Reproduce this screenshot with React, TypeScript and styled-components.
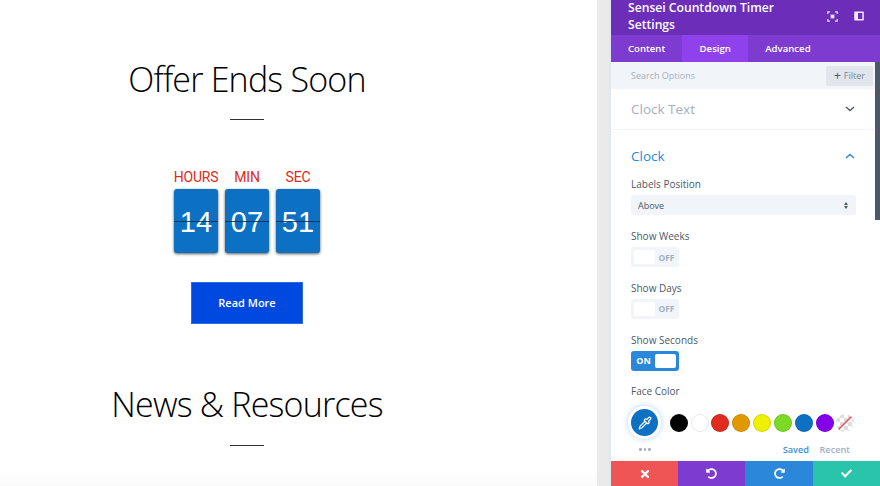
import React from "react";
import styled, { createGlobalStyle } from "styled-components";
import { FaTimes, FaUndoAlt, FaRedoAlt, FaCheck } from "react-icons/fa";
import { Pipette } from "lucide-react";

const GlobalStyle = createGlobalStyle`
  html, body {
    margin: 0;
    padding: 0;
    background: #fff;
    overflow: hidden;
  }
  * {
    box-sizing: border-box;
  }
`;

const clock = [
  { label: "HOURS", value: "14" },
  { label: "MIN", value: "07" },
  { label: "SEC", value: "51" },
];

const swatches = ["#000000", "#ffffff", "#e02b20", "#e09900", "#edf000", "#7cda24", "#0c71c3", "#8300e9"];

const Chevron = ({ up, color }: { up?: boolean; color: string }) => (
  <svg width="10" height="6" viewBox="0 0 10 6" fill="none" stroke={color} strokeWidth="1.400">
    <path d={up ? "M1 5 5 1.500 9 5" : "M1 1 5 4.500 9 1"} />
  </svg>
);

const App = () => {
  return (
    <Page>
      <GlobalStyle />
      <Canvas>
        <Heading>Offer Ends Soon</Heading>
        <Divider />
        <Timer>
          {clock.map((item) => (
            <TimerColumn key={item.label}>
              <TimerLabel>{item.label}</TimerLabel>
              <Flip>
                <FlipValue>{item.value}</FlipValue>
                <FlipLine />
              </Flip>
            </TimerColumn>
          ))}
        </Timer>
        <ReadMore>Read More</ReadMore>
        <Heading $second>News &amp; Resources</Heading>
        <Divider $second />
      </Canvas>
      <Gutter />
      <Panel>
        <PanelHeader>
          <PanelTitle>Sensei Countdown Timer Settings</PanelTitle>
          <HeaderIcons>
            <svg width="11" height="11" viewBox="0 0 11 11" fill="none" stroke="#e9dcfa" strokeWidth="1.200">
              <path d="M.8 3V.8H3M8 .8h2.200V3M10.200 8v2.200H8M3 10.200H.8V8" />
              <rect x="3.600" y="3.600" width="3.800" height="3.800" fill="#e9dcfa" stroke="none" />
            </svg>
            <svg width="10" height="10" viewBox="0 0 10 10">
              <path
                fill="#f1e8fc"
                fillRule="evenodd"
                d="M1 .5h8a.8.8 0 0 1 .8.8v7.400a.8.8 0 0 1-.8.8H1a.8.8 0 0 1-.8-.8V1.300A.8.8 0 0 1 1 .5zM4 2v6h4.300V2z"
              />
            </svg>
          </HeaderIcons>
        </PanelHeader>
        <Tabs>
          <Tab>Content</Tab>
          <Tab $active>Design</Tab>
          <Tab>Advanced</Tab>
        </Tabs>
        <PanelBody>
          <PanelContent>
            <SearchBar>
              <SearchText>Search Options</SearchText>
              <FilterButton>
                <FilterPlus>+</FilterPlus> Filter
              </FilterButton>
            </SearchBar>
            <ClosedGroup>
              <GroupTitle>Clock Text</GroupTitle>
              <Chevron color="#4c5866" />
            </ClosedGroup>
            <OpenGroup>
              <OpenHead>
                <GroupTitle $open>Clock</GroupTitle>
                <Chevron up color="#2b87da" />
              </OpenHead>
              <FieldLabel>Labels Position</FieldLabel>
              <SelectBox>
                Above
                <SelectArrows>
                  <ArrowUp />
                  <ArrowDown />
                </SelectArrows>
              </SelectBox>
              <FieldLabel>Show Weeks</FieldLabel>
              <Toggle>
                <Knob />
                <ToggleText>OFF</ToggleText>
              </Toggle>
              <FieldLabel>Show Days</FieldLabel>
              <Toggle>
                <Knob />
                <ToggleText>OFF</ToggleText>
              </Toggle>
              <FieldLabel>Show Seconds</FieldLabel>
              <Toggle $on>
                <ToggleText $on>ON</ToggleText>
                <Knob />
              </Toggle>
              <FieldLabel>Face Color</FieldLabel>
              <ColorRow>
                <Picker>
                  <Pipette size={14} color="#fff" strokeWidth={2} />
                </Picker>
                <Swatches>
                  {swatches.map((c) => (
                    <Swatch key={c} $color={c} />
                  ))}
                  <NoColor>
                    <svg width="18" height="18" viewBox="0 0 18 18">
                      <path d="M16 2 2 16" stroke="#f4525a" strokeWidth="1.600" />
                    </svg>
                  </NoColor>
                </Swatches>
              </ColorRow>
              <ColorFooter>
                <Dots>
                  <Dot />
                  <Dot />
                  <Dot />
                </Dots>
                <SavedLinks>
                  <SavedLink $active>Saved</SavedLink>
                  <SavedLink>Recent</SavedLink>
                </SavedLinks>
              </ColorFooter>
            </OpenGroup>
          </PanelContent>
          <ScrollTrack>
            <ScrollThumb />
          </ScrollTrack>
        </PanelBody>
        <ActionBar>
          <Action $color="#ef5555">
            <FaTimes size={12} />
          </Action>
          <Action $color="#7e3bd0">
            <FaUndoAlt size={11} />
          </Action>
          <Action $color="#2b87da">
            <FaRedoAlt size={11} />
          </Action>
          <Action $color="#29c4a9">
            <FaCheck size={11} />
          </Action>
        </ActionBar>
      </Panel>
    </Page>
  );
};

const Page = styled.div`
  display: flex;
  width: 880px;
  height: 486px;
  overflow: hidden;
  background: #fff;
`;

const Canvas = styled.main`
  width: 597px;
  flex-shrink: 0;
  padding: 0 103px 0 0;
  display: flex;
  flex-direction: column;
  align-items: center;
  background: linear-gradient(#fff 470px, #fafafa 486px);
`;

const Heading = styled.h1<{ $second?: boolean }>`
  margin: ${(props) => (props.$second ? "58px" : "57px")} 0 0;
  font-family: "Open Sans", sans-serif;
  font-weight: 300;
  font-size: 34px;
  letter-spacing: -0.8px;
  line-height: 44px;
  color: #000;
  white-space: nowrap;
`;

const Divider = styled.div<{ $second?: boolean }>`
  width: 34px;
  height: 1px;
  margin-top: ${(props) => (props.$second ? "19px" : "18px")};
  background: #333;
`;

const Timer = styled.div`
  display: flex;
  gap: 7px;
  margin-top: 47px;
`;

const TimerColumn = styled.div`
  width: 44px;
  display: flex;
  flex-direction: column;
  align-items: center;
`;

const TimerLabel = styled.div`
  font-family: Roboto, sans-serif;
  font-size: 14px;
  letter-spacing: -0.2px;
  line-height: 20px;
  color: #e02b20;
  white-space: nowrap;
`;

const Flip = styled.div`
  position: relative;
  width: 44px;
  height: 64px;
  margin-top: 2px;
  padding-top: 3px;
  display: flex;
  align-items: center;
  justify-content: center;
  background: #0c71c3;
  border-radius: 3px;
  box-shadow: 0 1px 3px rgba(0, 0, 0, 0.65);
`;

const FlipValue = styled.span`
  font-family: "Liberation Sans", Arial, sans-serif;
  font-size: 29px;
  color: #fff;
`;

const FlipLine = styled.div`
  position: absolute;
  left: 0;
  right: 0;
  top: 32px;
  height: 1px;
  background: rgba(10, 40, 80, 0.8);
`;

const ReadMore = styled.a`
  width: 112px;
  height: 42px;
  margin-top: 29px;
  padding-bottom: 2px;
  display: flex;
  align-items: center;
  justify-content: center;
  background: #0049e0;
  border: 1px solid #2e6be6;
  color: #fff;
  font-family: "Open Sans", sans-serif;
  font-weight: 600;
  font-size: 11px;
`;

const Gutter = styled.div`
  width: 14px;
  flex-shrink: 0;
  background: linear-gradient(90deg, #e8eaeb 0, #e8eaeb 12px, #dfe8f2 12px);
`;

const Panel = styled.aside`
  width: 269px;
  flex-shrink: 0;
  height: 486px;
  background: #fff;
  font-family: "Open Sans", sans-serif;
  display: flex;
  flex-direction: column;
`;

const PanelHeader = styled.header`
  height: 35px;
  flex-shrink: 0;
  overflow: hidden;
  background: #6c2eb9;
  display: flex;
  justify-content: space-between;
  padding: 0 16px 0 17px;
`;

const PanelTitle = styled.div`
  width: 170px;
  height: 33px;
  font-size: 12.150px;
  font-weight: 600;
  line-height: 16.500px;
  color: #fff;
`;

const HeaderIcons = styled.div`
  display: flex;
  align-items: center;
  gap: 16px;
  height: 32px;
`;

const Tabs = styled.nav`
  height: 27px;
  flex-shrink: 0;
  display: flex;
  background: #7d3bcf;
`;

const Tab = styled.div<{ $active?: boolean }>`
  width: ${(props) => (props.$active ? "66px" : "auto")};
  padding: 0 17px;
  display: flex;
  align-items: center;
  justify-content: center;
  font-size: 9.600px;
  font-weight: 600;
  color: #fff;
  background: ${(props) => (props.$active ? "#8f42ec" : "transparent")};
`;

const PanelBody = styled.div`
  flex: 1;
  min-height: 0;
  display: flex;
`;

const PanelContent = styled.div`
  width: 264px;
  flex-shrink: 0;
  display: flex;
  flex-direction: column;
`;

const SearchBar = styled.div`
  height: 27px;
  flex-shrink: 0;
  display: flex;
  align-items: center;
  justify-content: space-between;
  padding: 0 2px 0 20px;
  background: #f1f5f9;
`;

const SearchText = styled.span`
  font-size: 9px;
  color: #a3b0c2;
`;

const FilterButton = styled.div`
  width: 47px;
  height: 20px;
  border-radius: 2px;
  display: flex;
  align-items: center;
  justify-content: center;
  gap: 3px;
  font-size: 9px;
  font-weight: 500;
  color: #7b8694;
  background: #e0e6ec;
`;

const FilterPlus = styled.span`
  font-size: 12px;
  line-height: 12px;
  color: #4c5866;
`;

const ClosedGroup = styled.section`
  height: 41px;
  flex-shrink: 0;
  display: flex;
  align-items: center;
  justify-content: space-between;
  padding: 0 20px;
  border-bottom: 1px solid #f1f5f9;
`;

const GroupTitle = styled.span<{ $open?: boolean }>`
  font-size: 13.500px;
  color: ${(props) => (props.$open ? "#2b87da" : "#a3b0c2")};
`;

const OpenGroup = styled.section`
  flex: 1;
  min-height: 0;
  padding: 0 19px 0 20px;
  display: flex;
  flex-direction: column;
`;

const OpenHead = styled.div`
  height: 18px;
  margin: 17px 0 12px;
  padding-right: 1px;
  flex-shrink: 0;
  display: flex;
  align-items: center;
  justify-content: space-between;
`;

const FieldLabel = styled.label`
  font-size: 10px;
  line-height: 14px;
  color: #4c5866;
  margin-bottom: 4px;
`;

const SelectBox = styled.div`
  height: 20px;
  margin-bottom: 14px;
  padding: 0 8px 0 7px;
  flex-shrink: 0;
  display: flex;
  align-items: center;
  justify-content: space-between;
  border-radius: 3px;
  background: #f1f5f9;
  font-size: 9px;
  color: #4c5866;
`;

const SelectArrows = styled.div`
  display: flex;
  flex-direction: column;
  gap: 1px;
`;

const ArrowUp = styled.i`
  border-left: 2.500px solid transparent;
  border-right: 2.500px solid transparent;
  border-bottom: 3px solid #4c5866;
`;

const ArrowDown = styled.i`
  border-left: 2.500px solid transparent;
  border-right: 2.500px solid transparent;
  border-top: 3px solid #4c5866;
`;

const Toggle = styled.div<{ $on?: boolean }>`
  width: 48px;
  height: 20px;
  margin-bottom: 13.800px;
  padding: 3px;
  flex-shrink: 0;
  display: flex;
  align-items: center;
  justify-content: space-between;
  border-radius: 3px;
  background: ${(props) => (props.$on ? "#2b87da" : "#f1f5f9")};
`;

const Knob = styled.div`
  width: 21px;
  height: 14px;
  border-radius: 2px;
  background: #fff;
`;

const ToggleText = styled.span<{ $on?: boolean }>`
  width: 19px;
  text-align: center;
  font-size: ${(props) => (props.$on ? "9px" : "8.500px")};
  font-weight: 700;
  color: ${(props) => (props.$on ? "#fff" : "#a3b0c2")};
`;

const ColorRow = styled.div`
  display: flex;
  align-items: center;
  height: 33px;
  margin-top: 4px;
  flex-shrink: 0;
`;

const Picker = styled.div`
  width: 27px;
  height: 27px;
  flex-shrink: 0;
  border-radius: 50%;
  display: flex;
  align-items: center;
  justify-content: center;
  background: #0c71c3;
  box-shadow: 0 0 0 3px #fff, 0 0 6px 3px rgba(43, 135, 218, 0.35);
`;

const Swatches = styled.div`
  display: flex;
  gap: 2.850px;
  margin-left: 11.700px;
`;

const Swatch = styled.div<{ $color: string }>`
  width: 18px;
  height: 18px;
  border-radius: 50%;
  background: ${(props) => props.$color};
  box-shadow: inset 0 0 0 1px rgba(0, 0, 0, 0.1);
`;

const NoColor = styled.div`
  width: 18px;
  height: 18px;
  border-radius: 50%;
  overflow: hidden;
  background: repeating-conic-gradient(#ddd 0 25%, #fff 0 50%) 0 0 / 8px 8px;
`;

const ColorFooter = styled.div`
  margin-top: 3px;
  display: flex;
  align-items: center;
  justify-content: space-between;
  height: 14px;
  padding: 0 6px 0 8px;
`;

const Dots = styled.div`
  display: flex;
  gap: 2px;
`;

const Dot = styled.i`
  width: 2.500px;
  height: 2.500px;
  border-radius: 50%;
  background: #a3b0c2;
`;

const SavedLinks = styled.div`
  display: flex;
  gap: 10.500px;
`;

const SavedLink = styled.span<{ $active?: boolean }>`
  font-size: 9.200px;
  font-weight: 600;
  color: ${(props) => (props.$active ? "#3a8fdc" : "#a3b0c2")};
`;

const ActionBar = styled.footer`
  height: 25px;
  flex-shrink: 0;
  display: grid;
  grid-template-columns: 67px 67px 68px 1fr;
`;

const Action = styled.div<{ $color: string }>`
  display: flex;
  align-items: center;
  justify-content: center;
  color: #fff;
  background: ${(props) => props.$color};
`;

const ScrollTrack = styled.div`
  width: 5px;
  flex-shrink: 0;
  background: #fff;
`;

const ScrollThumb = styled.div`
  width: 5px;
  height: 158px;
  background: #4c5866;
`;

export default App;
